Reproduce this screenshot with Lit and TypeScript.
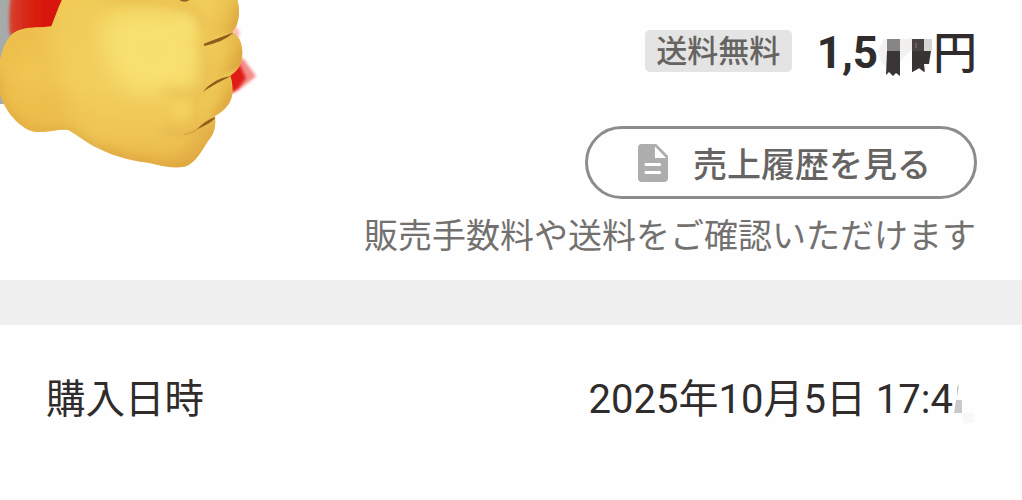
import { LitElement, html, css } from "lit";
import { customElement } from "lit/decorators.js";

@customElement("product-thumb")
class ProductThumb extends LitElement {
  static styles = css`
    :host { display: block; width: 270px; height: 180px; }
    svg { display: block; }
  `;
  render() {
    return html`
      <svg width="270" height="180" viewBox="0 0 810 540" aria-hidden="true">
        <defs>
          <linearGradient id="skin" x1="0.5" y1="0" x2="0.43" y2="1">
            <stop offset="0" stop-color="#f0cb58" />
            <stop offset="0.5" stop-color="#f2cf5e" />
            <stop offset="0.78" stop-color="#eec455" />
            <stop offset="1" stop-color="#e5ad43" />
          </linearGradient>
          <linearGradient id="finger" x1="0" y1="0" x2="1" y2="0.5">
            <stop offset="0" stop-color="#f3d262" />
            <stop offset="0.55" stop-color="#ecc352" />
            <stop offset="1" stop-color="#deaa40" />
          </linearGradient>
          <linearGradient id="red" x1="0" y1="0" x2="1" y2="0">
            <stop offset="0" stop-color="#d8402e" />
            <stop offset="0.4" stop-color="#d91b0c" />
            <stop offset="1" stop-color="#d91105" />
          </linearGradient>
          <filter id="soft" x="-30%" y="-30%" width="160%" height="160%"><feGaussianBlur stdDeviation="5" /></filter>
          <filter id="mid" filterUnits="userSpaceOnUse" x="-100" y="-100" width="1010" height="740"><feGaussianBlur stdDeviation="12" /></filter>
          <filter id="glow" filterUnits="userSpaceOnUse" x="-200" y="-200" width="1210" height="940"><feGaussianBlur stdDeviation="34" /></filter>
          <filter id="line" x="-30%" y="-50%" width="160%" height="200%"><feGaussianBlur stdDeviation="2" /></filter>
          <clipPath id="fist">
            <path d="M188 -5C174 22 166 50 154 79C116 85 76 78 44 97C12 120 0 168 -6 222C-8 268 4 307 30 342C51 369 80 394 111 396C145 397 178 386 205 390C239 409 258 429 294 445C349 474 413 485 448 489C485 499 535 510 566 495C598 475 611 439 631 414C644 397 648 375 645 348C675 331 697 307 697 275C698 251 695 241 691 227C718 211 729 184 727 153C725 125 716 107 697 97C719 72 721 30 711 -5Z" />
          </clipPath>
        </defs>
        <rect x="0" y="0" width="36" height="312" fill="#a6aaa8" />
        <path d="M34 -30H225V105H30Q24 50 34 -30Z" fill="url(#red)" filter="url(#soft)" />
        <path d="M680 185Q725 172 731 177L768 229Q733 260 690 283Z" fill="#f58c88" filter="url(#soft)" />
        <path d="M680 210L718 192L738 234L714 268L680 284Z" fill="#df1a12" filter="url(#soft)" />
        <path d="M700 75Q720 85 719 110L697 115Z" fill="#f9bcba" filter="url(#soft)" />
        <g clip-path="url(#fist)">
          <rect x="-10" y="-10" width="760" height="530" fill="url(#skin)" />
          <path d="M-60 40H150C135 150 145 240 215 310L205 420H-60Z" fill="#ebb947" opacity="0.7" filter="url(#glow)" />
          <ellipse cx="90" cy="220" rx="48" ry="70" fill="#f2c954" opacity="0.7" filter="url(#glow)" />
          <path d="M300 60Q445 5 590 60L595 250Q520 260 430 280Q310 260 300 60Z" fill="#f9e576" opacity="0.8" filter="url(#glow)" />
          <path d="M612 -30H745V85Q675 105 614 133Q597 65 612 -30Z" fill="url(#finger)" filter="url(#mid)" />
          <path d="M613 135Q660 105 697 98Q745 115 727 195Q661 230 609 276Q617 190 613 135Z" fill="url(#finger)" filter="url(#soft)" />
          <path d="M609 276Q649 239 692 227L706 305Q650 346 590 388Q609 335 609 276Z" fill="url(#finger)" filter="url(#soft)" />
          <path d="M590 388L660 340L665 395L570 530L505 500Q560 440 590 388Z" fill="#e2ad44" opacity="0.6" filter="url(#mid)" />
          <path d="M609 120Q616 180 604 265Q582 320 586 375" fill="none" stroke="#dda943" stroke-width="14" opacity="0.5" filter="url(#mid)" />
          <path d="M490 272Q545 284 600 276" fill="none" stroke="#dfac44" stroke-width="16" opacity="0.45" filter="url(#mid)" />
          <path d="M490 390Q548 412 590 390" fill="none" stroke="#d99f3c" stroke-width="16" opacity="0.5" filter="url(#mid)" />
          <path d="M553 403Q575 400 590 388" fill="none" stroke="#c68a30" stroke-width="5" opacity="0.4" filter="url(#line)" />
          <path d="M320 -4Q480 0 548 16Q598 35 606 85" fill="none" stroke="#dfad43" stroke-width="16" opacity="0.5" filter="url(#mid)" />
          <ellipse cx="555" cy="75" rx="35" ry="34" fill="#f8e278" opacity="0.5" filter="url(#mid)" />
          <ellipse cx="545" cy="330" rx="32" ry="22" fill="#f7dc6a" opacity="0.55" filter="url(#mid)" />
          <path d="M-6 222Q-3 310 30 342Q75 410 205 390Q300 470 448 489Q535 510 575 495Q620 455 645 380M727 150Q724 190 691 224M697 275Q694 315 645 348M716 20Q720 80 685 100" fill="none" stroke="#d5983a" stroke-width="16" opacity="0.6" filter="url(#mid)" />
          <g filter="url(#line)">
            <path d="M612 131Q652 116 702 97Q670 127 612 138Z" fill="#8e5d1c" />
            <path d="M608 275Q641 235 695 227Q652 247 608 275Z" fill="#8e5d1c" />
            <path d="M589 389Q616 360 648 350Q641 366 589 389Z" fill="#95621f" />
            <path d="M540 -3Q553 6 567 -3" fill="none" stroke="#8b642c" stroke-width="7" />
          </g>
        </g>
      </svg>
    `;
  }
}

@customElement("app-root")
class AppRoot extends LitElement {
  static styles = css`
    :host {
      display: block;
      width: 1022px;
      height: 500px;
      overflow: hidden;
      background: #fefefe;
      color: #2f2c2b;
      font-family: Roboto, "Noto Sans CJK JP", sans-serif;
      white-space: nowrap;
    }
    .summary { display: flex; justify-content: space-between; height: 280px; }
    .details { display: flex; flex-direction: column; align-items: flex-end; padding: 24px 45px 0 0; }
    .price-row { display: flex; align-items: center; height: 56px; }
    .tag {
      box-sizing: border-box;
      width: 147px;
      height: 42px;
      margin: -2px 25px 0 0;
      border-radius: 5px;
      background: #e4e4e4;
      color: #666462;
      font-size: 31px;
      font-weight: 500;
      line-height: 43px;
      text-align: center;
    }
    .price { display: flex; align-items: center; font-size: 44px; font-weight: 700; line-height: 56px; }
    .digits { padding-top: 2px; }
    .mask { display: block; width: 55px; height: 50px; margin-top: -2px; }
    .yen { padding-top: 3px; font-weight: 500; }
    .history {
      box-sizing: border-box;
      display: flex;
      align-items: center;
      width: 392px;
      height: 73px;
      margin: 46px 0 0;
      padding: 0 0 0 50px;
      border: 3px solid #8c8c8c;
      border-radius: 37px;
      background: #fefefe;
      color: #666462;
      font: 500 34px/67px Roboto, "Noto Sans CJK JP", sans-serif;
    }
    .doc { width: 30px; height: 38px; margin-right: 25px; }
    .label { padding-top: 5px; }
    .note { margin: 12px 1px 0 0; color: #73716f; font-size: 34px; line-height: 50px; }
    .divider { height: 45px; background: #efefef; }
    .purchase { display: flex; justify-content: space-between; padding: 46px 46px 0; font-size: 39.5px; line-height: 58px; }
    .date { display: flex; font-size: 40px; }
    .smudge { width: 23px; height: 58px; }
  `;
  render() {
    return html`
      <section class="summary">
        <product-thumb></product-thumb>
        <div class="details">
          <div class="price-row">
            <span class="tag">送料無料</span>
            <span class="price">
              <span class="digits">1,5</span>
              <svg class="mask" viewBox="878 25 55 50" aria-hidden="true">
                <path d="M878 50L884 38L887 38V66L881 61Z M898 42L912 36V48L899 62Z" fill="#eeedec" opacity=".7" />
                <path d="M887 38H900V50H887Z" fill="#888685" />
                <path d="M887 50H900V75L896 72L893 75L889 71L886 74Z" fill="#393635" />
                <path d="M900 38H912V50H900Z" fill="#f1f0ef" />
                <path d="M912 38H924V63L925 71L919 67L916 69L912 71Z" fill="#494341" />
                <path d="M912 50H931L929 63H924V71L919 67L912 71Z" fill="#373433" />
                <path d="M924 38H932V50H924Z" fill="#d8d6d5" />
                <path d="M916 42V47" stroke="#987777" />
              </svg>
              <span class="yen">円</span>
            </span>
          </div>
          <button class="history">
            <svg class="doc" viewBox="0 0 31 38" preserveAspectRatio="none" aria-hidden="true">
              <path fill="#adadad" fill-rule="evenodd" d="M4 0H19L31 12V34Q31 38 27 38H4Q0 38 0 34V4Q0 0 4 0ZM17.5 2.5V14H29ZM7 19V22H23.5V19ZM7 27V30H23.5V27Z" />
            </svg>
            <span class="label">売上履歴を見る</span>
          </button>
          <div class="note">販売手数料や送料をご確認いただけます</div>
        </div>
      </section>
      <div class="divider"></div>
      <section class="purchase">
        <span>購入日時</span>
        <span class="date">
          <span>2025年10月5日 17:4</span>
          <svg class="smudge" viewBox="953 371 23 58" aria-hidden="true">
            <path d="M957 388L959 384L957 397Z" fill="#bcbcbc" />
            <path d="M956 400H962V413H954Z" fill="#c9c9c9" />
            <path d="M962 413H974V423H964Z" fill="#f8f8f8" />
          </svg>
        </span>
      </section>
    `;
  }
}
